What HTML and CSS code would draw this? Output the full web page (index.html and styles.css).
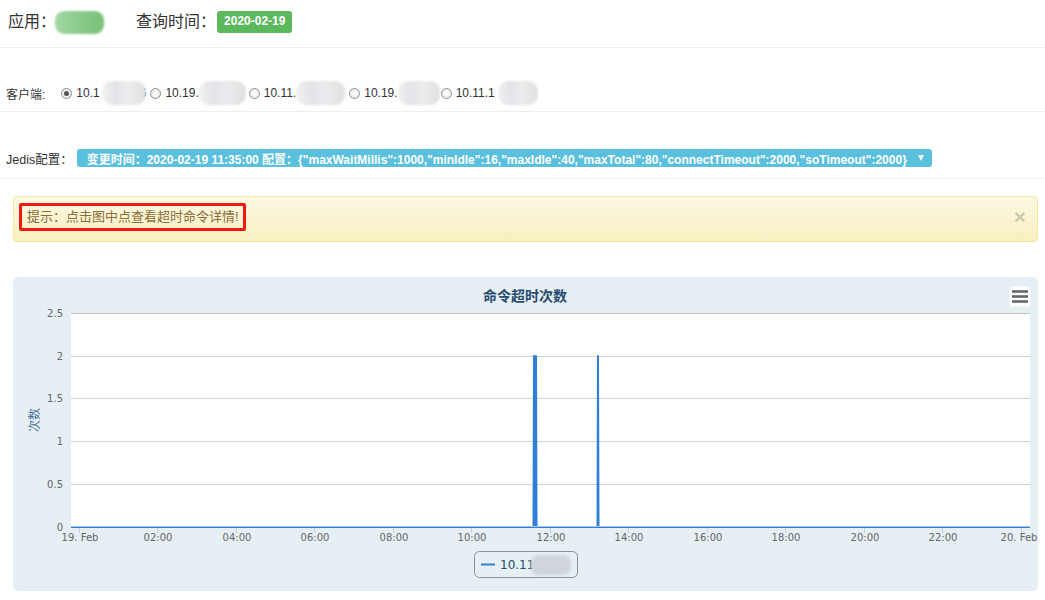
FILE: index.html
```html
<!DOCTYPE html>
<html lang="zh">
<head>
<meta charset="utf-8">
<title>命令超时</title>
<link rel="stylesheet" href="styles.css">
</head>
<body>
<div class="head">
  <span class="head-label">应用：</span>
  <span class="blob-green"></span>
  <span class="head-label query">查询时间：</span>
  <span class="date-label">2020-02-19</span>
</div>

<div class="clients">
  <span class="row-label">客户端:</span>
  <span class="radio checked"></span><span class="ip">10.1</span><span class="blob b1"></span><span class="ip tail">6</span>
  <span class="radio"></span><span class="ip">10.19.</span><span class="blob b2"></span>
  <span class="radio"></span><span class="ip">10.11.</span><span class="blob b3"></span>
  <span class="radio"></span><span class="ip">10.19.</span><span class="blob b4"></span>
  <span class="radio"></span><span class="ip">10.11.1</span><span class="blob b5"></span>
</div>

<div class="jedis">
  <span class="row-label">Jedis配置：</span>
  <span class="cfg-btn">变更时间：2020-02-19 11:35:00 配置：{"maxWaitMillis":1000,"minIdle":16,"maxIdle":40,"maxTotal":80,"connectTimeout":2000,"soTimeout":2000}<span class="caret"></span></span>
</div>

<div class="alert">
  <span class="hint">提示：点击图中点查看超时命令详情!</span>
  <span class="close">×</span>
</div>

<div class="chart">
  <svg class="chart-svg" width="1025" height="314" viewBox="0 0 1025 314">
    <text x="512" y="24" text-anchor="middle" class="c-title">命令超时次数</text>
    <rect x="996.5" y="9.5" width="21" height="20" rx="3" fill="#ffffff" fill-opacity="0.85"/>
    <g stroke="#666" stroke-width="2.6">
      <line x1="999" y1="14.5" x2="1015" y2="14.5"/>
      <line x1="999" y1="19.5" x2="1015" y2="19.5"/>
      <line x1="999" y1="24.5" x2="1015" y2="24.5"/>
    </g>
    <rect x="58" y="36" width="959" height="214" fill="#ffffff"/>
    <g stroke="#d2d2d2" stroke-width="1">
      <line x1="58" y1="36.5" x2="1017" y2="36.5" stroke="#c0c0c0"/>
      <line x1="58" y1="79.5" x2="1017" y2="79.5"/>
      <line x1="58" y1="121.5" x2="1017" y2="121.5"/>
      <line x1="58" y1="164.5" x2="1017" y2="164.5"/>
      <line x1="58" y1="207.5" x2="1017" y2="207.5"/>
    </g>
    <g class="ylab" text-anchor="end">
      <text x="50" y="40">2.5</text>
      <text x="50" y="83">2</text>
      <text x="50" y="125">1.5</text>
      <text x="50" y="168">1</text>
      <text x="50" y="211">0.5</text>
      <text x="50" y="254">0</text>
    </g>
    <text class="ytitle" transform="translate(26,143) rotate(-90)" text-anchor="middle">次数</text>
    <g stroke="#c0d0e0" stroke-width="1">
      <line x1="58" y1="250.5" x2="1017" y2="250.5"/>
      <line x1="66.5" y1="250" x2="66.5" y2="256"/>
      <line x1="144.5" y1="250" x2="144.5" y2="256"/>
      <line x1="223.5" y1="250" x2="223.5" y2="256"/>
      <line x1="301.5" y1="250" x2="301.5" y2="256"/>
      <line x1="380.5" y1="250" x2="380.5" y2="256"/>
      <line x1="458.5" y1="250" x2="458.5" y2="256"/>
      <line x1="537.5" y1="250" x2="537.5" y2="256"/>
      <line x1="615.5" y1="250" x2="615.5" y2="256"/>
      <line x1="694.5" y1="250" x2="694.5" y2="256"/>
      <line x1="772.5" y1="250" x2="772.5" y2="256"/>
      <line x1="851.5" y1="250" x2="851.5" y2="256"/>
      <line x1="929.5" y1="250" x2="929.5" y2="256"/>
      <line x1="1008.5" y1="250" x2="1008.5" y2="256"/>
    </g>
    <path d="M58,250 H520.5 L521,79 L522,250 L523,79 L523.5,250 H584.5 L585,79 L585.5,250 H1017" fill="none" stroke="#2f7ed8" stroke-width="2" stroke-linejoin="round"/>
    <line x1="58" y1="249.5" x2="1017" y2="249.5" stroke="#a9c6ea" stroke-width="1"/>
    <g class="xlab" text-anchor="middle">
      <text x="67" y="263">19. Feb</text>
      <text x="145" y="263">02:00</text>
      <text x="224" y="263">04:00</text>
      <text x="302" y="263">06:00</text>
      <text x="381" y="263">08:00</text>
      <text x="459" y="263">10:00</text>
      <text x="538" y="263">12:00</text>
      <text x="616" y="263">14:00</text>
      <text x="695" y="263">16:00</text>
      <text x="773" y="263">18:00</text>
      <text x="852" y="263">20:00</text>
      <text x="930" y="263">22:00</text>
      <text x="1006" y="263">20. Feb</text>
    </g>
    <rect x="461.5" y="274.5" width="103" height="26" rx="5" fill="none" stroke="#909090"/>
    <line x1="468" y1="287.5" x2="482" y2="287.5" stroke="#2f7ed8" stroke-width="2"/>
    <text x="487" y="292" class="legend">10.11</text>
    <rect x="518" y="278" width="40" height="20" rx="8" fill="#cfd5da" class="soft"/>
  </svg>
</div>
</body>
</html>
```

FILE: styles.css
```css
body {
  margin: 0;
  background: #fff;
  color: #333;
  font-family: "Liberation Sans", "Noto Sans CJK SC", sans-serif;
}

.head {
  display: flex;
  align-items: center;
  padding: 11px 0 14px 8px;
  border-bottom: 1px solid #eee;
  font-size: 16px;
  line-height: 22px;
  height: 22px;
}

.blob-green {
  display: inline-block;
  width: 49px;
  height: 23px;
  margin-left: -1px;
  border-radius: 9px;
  background: linear-gradient(90deg, #a6d8a6 0%, #8ccb8c 45%, #78c178 100%);
  filter: blur(1px);
}

.head-label.query {
  margin-left: 32px;
}

.date-label {
  display: inline-block;
  margin-left: 1px;
  padding: 4px 7px 5px;
  font-size: 12px;
  line-height: 13px;
  font-weight: bold;
  color: #fff;
  background: #5cb85c;
  border-radius: 3px;
}

.clients,
.jedis {
  display: flex;
  align-items: center;
  border-bottom: 1px solid #eee;
  padding-left: 6px;
  font-size: 12px;
}

.clients {
  padding-top: 37px;
  padding-bottom: 10px;
  height: 16px;
}

.jedis {
  padding-top: 37px;
  padding-bottom: 11px;
  height: 18px;
}

.row-label {
  color: #333;
  font-size: 12px;
}

.jedis .row-label {
  font-size: 12.5px;
}

.clients .row-label {
  margin-right: 16px;
}

.radio {
  display: inline-block;
  box-sizing: border-box;
  width: 11px;
  height: 11px;
  border: 1px solid #8e8e8e;
  border-radius: 50%;
  background: radial-gradient(circle, #fdfdfd 0%, #e6e6e6 100%);
  margin-right: 4px;
  position: relative;
}

.radio.checked::after {
  content: "";
  position: absolute;
  left: 2px;
  top: 2px;
  width: 5px;
  height: 5px;
  border-radius: 50%;
  background: #555;
}

.ip {
  color: #333;
  font-size: 12px;
}

.ip.tail {
  margin-right: 4px;
}

.blob {
  display: inline-block;
  height: 24px;
  border-radius: 10px;
  background: linear-gradient(90deg, #f2f2f3 0%, #e4e4e8 30%, #ececef 60%, #e0e0e3 100%);
  filter: blur(1px);
}

.b1 { width: 44px; margin-left: 2px; margin-right: -6px; }
.b2 { width: 47px; margin-right: 3px; }
.b3 { width: 49px; margin-right: 4px; }
.b4 { width: 42px; margin-right: 1px; }
.b5 { width: 40px; margin-left: 3px; }

.cfg-btn {
  display: inline-flex;
  align-items: center;
  margin-left: 4px;
  padding: 0 8px 0 10px;
  height: 18px;
  background: #5bc0de;
  border-radius: 3px;
  color: #fff;
  font-weight: bold;
  font-size: 12px;
  white-space: nowrap;
}

.caret {
  display: inline-block;
  width: 0;
  height: 0;
  margin-left: 11px;
  border-left: 3.5px solid transparent;
  border-right: 3.5px solid transparent;
  border-top: 6px solid #fff;
}

.alert {
  display: flex;
  align-items: flex-start;
  justify-content: space-between;
  margin: 17px 7px 0 13px;
  padding: 6px 11px 10px 5px;
  border: 1px solid #f5e79e;
  border-radius: 4px;
  background: linear-gradient(#fcf8e3, #f8efc0);
}

.hint {
  display: inline-block;
  border: 3px solid #f01a12;
  border-radius: 2px;
  padding: 0 4px 0 5px;
  height: 22px;
  line-height: 22px;
  font-size: 13px;
  color: #8a6d3b;
}

.close {
  font-size: 21px;
  font-weight: bold;
  line-height: 28px;
  color: #000;
  opacity: 0.18;
}

.chart {
  margin: 35px 7px 0 13px;
  height: 314px;
  background: #e5eff4;
  border-radius: 5px;
}

.chart-svg {
  display: block;
  overflow: visible;
  font-family: "DejaVu Sans", "Noto Sans CJK SC", sans-serif;
}

.c-title {
  font-family: "Noto Sans CJK SC", sans-serif;
  font-size: 14px;
  font-weight: bold;
  fill: #274b6d;
}

.ylab text,
.xlab text {
  font-size: 10px;
  fill: #666;
}

.xlab text {
  transform: translateY(1px);
}

.ytitle {
  font-family: "Noto Sans CJK SC", sans-serif;
  font-size: 12px;
  fill: #4d759e;
}

.legend {
  font-size: 12px;
  fill: #274b6d;
}

.soft {
  filter: blur(1.5px);
}
```
